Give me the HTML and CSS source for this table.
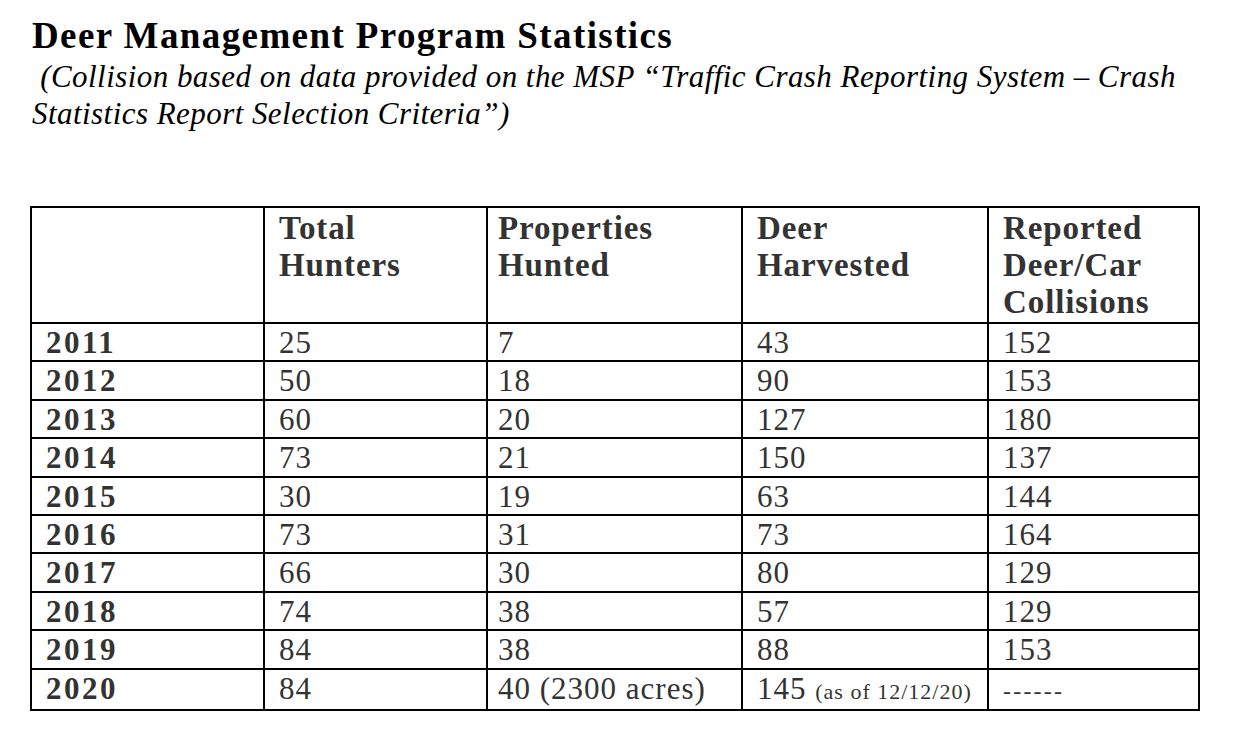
FILE: index.html
```html
<!DOCTYPE html>
<html>
<head>
<meta charset="utf-8">
<link rel="stylesheet" href="styles.css">
</head>
<body>
<div class="page">
  <h1 class="title">Deer Management Program Statistics</h1>
  <p class="subtitle">&nbsp;(Collision based on data provided on the MSP “Traffic Crash Reporting System – Crash Statistics Report Selection Criteria”)</p>
  <table class="stats">
    <colgroup>
      <col class="c1"><col class="c2"><col class="c3"><col class="c4"><col class="c5">
    </colgroup>
    <thead>
      <tr class="head">
        <th></th>
        <th>Total<br>Hunters</th>
        <th class="narrow">Properties<br>Hunted</th>
        <th>Deer<br>Harvested</th>
        <th>Reported<br>Deer/Car<br>Collisions</th>
      </tr>
    </thead>
    <tbody>
      <tr><th class="year">2011</th><td>25</td><td class="narrow">7</td><td>43</td><td>152</td></tr>
      <tr><th class="year">2012</th><td>50</td><td class="narrow">18</td><td>90</td><td>153</td></tr>
      <tr><th class="year">2013</th><td>60</td><td class="narrow">20</td><td>127</td><td>180</td></tr>
      <tr><th class="year">2014</th><td>73</td><td class="narrow">21</td><td>150</td><td>137</td></tr>
      <tr><th class="year">2015</th><td>30</td><td class="narrow">19</td><td>63</td><td>144</td></tr>
      <tr><th class="year">2016</th><td>73</td><td class="narrow">31</td><td>73</td><td>164</td></tr>
      <tr><th class="year">2017</th><td>66</td><td class="narrow">30</td><td>80</td><td>129</td></tr>
      <tr><th class="year">2018</th><td>74</td><td class="narrow">38</td><td>57</td><td>129</td></tr>
      <tr><th class="year">2019</th><td>84</td><td class="narrow">38</td><td>88</td><td>153</td></tr>
      <tr><th class="year">2020</th><td>84</td><td class="narrow">40 (2300 acres)</td><td>145 <span class="note">(as of 12/12/20)</span></td><td><span class="dash">------</span></td></tr>
    </tbody>
  </table>
</div>
</body>
</html>
```

FILE: styles.css
```css
html, body {
  margin: 0;
  padding: 0;
  background: #ffffff;
}
.page {
  padding: 13px 0 0 32px;
  font-family: "Liberation Serif", "DejaVu Serif", serif;
  color: #000;
}
.title {
  margin: 0;
  font-size: 37px;
  line-height: 45px;
  font-weight: bold;
  letter-spacing: 1.4px;
}
.subtitle {
  margin: 0;
  width: 1190px;
  font-size: 31px;
  line-height: 37px;
  font-style: italic;
  letter-spacing: 0.45px;
}
.stats {
  margin: 74px 0 0 -2px;
  border-collapse: collapse;
  width: 1168px;
  table-layout: fixed;
  color: #333;
}
.c1 { width: 233px; }
.c2 { width: 223px; }
.c3 { width: 255px; }
.c4 { width: 246px; }
.c5 { width: 211px; }
.stats th, .stats td {
  border: 2px solid #000;
  text-align: left;
  vertical-align: top;
  padding: 2px 14px 0 14px;
  font-size: 31px;
  line-height: 34.4px;
  font-weight: normal;
  letter-spacing: 1px;
  white-space: nowrap;
}
.stats .narrow {
  padding-left: 10px;
}
.stats .head th {
  height: 112px;
  padding-top: 2px;
  font-size: 33px;
  font-weight: bold;
  line-height: 37px;
  letter-spacing: 0.9px;
}
.stats .year {
  font-weight: bold;
  letter-spacing: 2.5px;
}
.stats .note {
  font-size: 22px;
  letter-spacing: 1px;
}
.stats .dash {
  font-size: 24px;
  letter-spacing: 2.2px;
}
```
